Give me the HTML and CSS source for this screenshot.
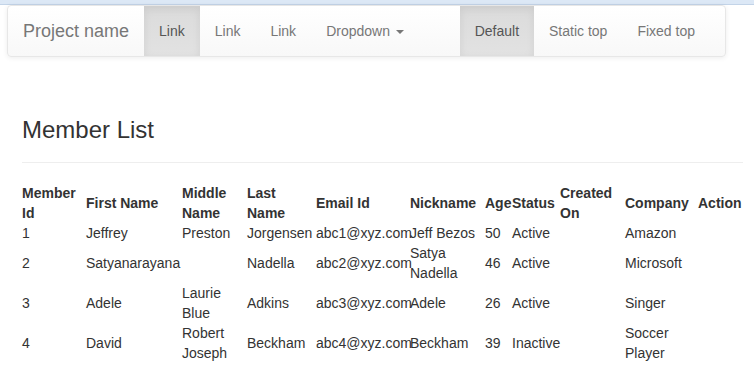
FILE: index.html
```html
<!DOCTYPE html>
<html lang="en">
<head>
    <meta charset="UTF-8">
    <meta name="viewport" content="width=device-width, initial-scale=1.0">
    <title>Member List</title>
    <link rel="stylesheet" href="styles.css">
</head>
<body>
    <div class="chrome"></div>
    <div class="page">
        <nav class="navbar">
            <a class="brand" href="#">Project name</a>
            <ul class="nav">
                <li class="active"><a href="#">Link</a></li>
                <li><a href="#">Link</a></li>
                <li><a href="#">Link</a></li>
                <li><a href="#">Dropdown <span class="caret"></span></a></li>
            </ul>
            <ul class="nav nav-right">
                <li class="active"><a href="#">Default</a></li>
                <li><a href="#">Static top</a></li>
                <li><a href="#">Fixed top</a></li>
            </ul>
        </nav>

        <div class="page-header">
            <h3>Member List</h3>
        </div>

        <table class="members">
            <thead>
                <tr>
                    <th>Member Id</th>
                    <th>First Name</th>
                    <th>Middle Name</th>
                    <th>Last Name</th>
                    <th>Email Id</th>
                    <th>Nickname</th>
                    <th>Age</th>
                    <th>Status</th>
                    <th>Created On</th>
                    <th>Company</th>
                    <th>Action</th>
                </tr>
            </thead>
            <tbody>
                <tr>
                    <td>1</td><td>Jeffrey</td><td>Preston</td><td>Jorgensen</td><td>abc1@xyz.com</td>
                    <td>Jeff Bezos</td><td>50</td><td>Active</td><td></td><td>Amazon</td><td></td>
                </tr>
                <tr>
                    <td>2</td><td>Satyanarayana</td><td></td><td>Nadella</td><td>abc2@xyz.com</td>
                    <td>Satya Nadella</td><td>46</td><td>Active</td><td></td><td>Microsoft</td><td></td>
                </tr>
                <tr>
                    <td>3</td><td>Adele</td><td>Laurie Blue</td><td>Adkins</td><td>abc3@xyz.com</td>
                    <td>Adele</td><td>26</td><td>Active</td><td></td><td>Singer</td><td></td>
                </tr>
                <tr>
                    <td>4</td><td>David</td><td>Robert Joseph</td><td>Beckham</td><td>abc4@xyz.com</td>
                    <td>Beckham</td><td>39</td><td>Inactive</td><td></td><td>Soccer Player</td><td></td>
                </tr>
            </tbody>
        </table>
    </div>
</body>
</html>
```

FILE: styles.css
```css
* {
    box-sizing: border-box;
}
body {
    margin: 0;
    font-family: "Liberation Sans", Arial, sans-serif;
    font-size: 14px;
    line-height: 20px;
    color: #333;
    background: #fff;
}
.chrome {
    height: 5px;
    background: #dce8f6;
    border-bottom: 1px solid #c3d4e8;
}
.page {
    padding: 0 11px 0 22px;
}

/* navbar */
.navbar {
    display: flex;
    width: 719px;
    margin-left: -15px;
    height: 52px;
    border: 1px solid #e7e7e7;
    border-radius: 4px;
    background: linear-gradient(to bottom, #fff 0%, #f8f8f8 100%);
    box-shadow: inset 0 1px 0 rgba(255, 255, 255, 0.15), 0 1px 5px rgba(0, 0, 0, 0.075);
}
.brand {
    padding: 15px;
    font-size: 18px;
    line-height: 20px;
    color: #777;
    text-decoration: none;
}
.nav {
    display: flex;
    list-style: none;
    margin: 0;
    padding: 0;
}
.nav-right {
    margin-left: auto;
    margin-right: 15px;
}
.nav a {
    display: block;
    padding: 15px;
    color: #777;
    text-decoration: none;
}
.nav .active a {
    color: #555;
    background: linear-gradient(to bottom, #dbdbdb 0%, #e2e2e2 100%);
    box-shadow: inset 0 3px 9px rgba(0, 0, 0, 0.075);
}
.caret {
    display: inline-block;
    width: 0;
    height: 0;
    margin-left: 2px;
    vertical-align: middle;
    border-top: 4px solid;
    border-right: 4px solid transparent;
    border-left: 4px solid transparent;
}

/* header */
.page-header {
    margin: 60px 0 20px;
    padding-bottom: 9px;
    border-bottom: 1px solid #eee;
}
.page-header h3 {
    margin: 0 0 10px;
    font-size: 24px;
    font-weight: 500;
    line-height: 1.1;
}

/* table */
.members {
    width: 721px;
    table-layout: fixed;
    border-collapse: collapse;
    border-spacing: 0;
}
.members th,
.members td {
    padding: 0;
    text-align: left;
    vertical-align: middle;
}
.members th:nth-child(1) { width: 64px; }
.members th:nth-child(2) { width: 96px; }
.members th:nth-child(3) { width: 65px; }
.members th:nth-child(4) { width: 69px; }
.members th:nth-child(5) { width: 94px; }
.members th:nth-child(6) { width: 75px; }
.members th:nth-child(7) { width: 27px; }
.members th:nth-child(8) { width: 48px; }
.members th:nth-child(9) { width: 65px; }
.members th:nth-child(10) { width: 73px; }
.members th:nth-child(11) { width: 45px; }
```
